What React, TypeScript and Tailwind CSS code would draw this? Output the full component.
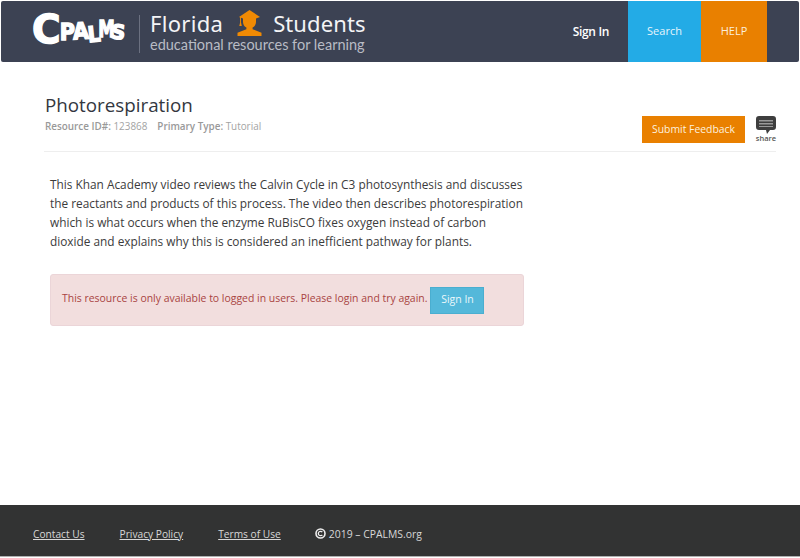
export default function App() {
  return (
    <div className="h-[558px] w-[800px] flex flex-col bg-white font-['Open_Sans',sans-serif] overflow-hidden">
      <header className="mx-px h-[61px] mt-px shrink-0 flex bg-[#3c4253] rounded-[2px] text-white">
        <div className="w-[31px]" />
        <div className="w-[107px] flex items-center font-['DejaVu_Sans',sans-serif] font-bold leading-none select-none -mt-[4px] [-webkit-text-stroke:1.4px_white]">
          <span className="text-[39px] -mr-[2px]">C</span>
          <span className="text-[23px] -mr-[3px] translate-y-[3px] scale-x-90">P</span>
          <span className="text-[23px] -mr-[3px] translate-y-[2px] -rotate-3 scale-x-90">A</span>
          <span className="text-[22px] -mr-[5px] translate-y-[5px] -rotate-6 scale-x-90">L</span>
          <span className="text-[23px] -mr-[6px] -translate-x-[1px] scale-x-[0.72]">M</span>
          <span className="text-[20px] -ml-[2px] translate-y-[2px] rotate-6">S</span>
        </div>
        <div className="w-px h-[38px] bg-[#6b7080] mt-[14px]" />
        <div className="ml-[10px] mt-[6px] flex flex-col font-['Noto_Sans',sans-serif]">
          <div className="flex items-center h-[32px] text-[22px] leading-none text-[#f4f4f6]">
            <span className="tracking-[0.3px]">Florida</span>
            <svg className="ml-[14px] mr-[11px] -mt-[1px]" width="25" height="26" viewBox="0 0 25 26">
              <path fill="#f08a04" d="M12.5 0 23 7l-4 1.6V12c0 2.6-1.6 4.6-3.4 5.6v1.6l8.9 3.6V26H.5v-3.2l8.9-3.6v-1.6C7.6 16.6 6 14.600 6 12V8.600L4 7.800v4.700l.8 3.500H2.300l.8-3.500V7.400L2 7z" />
            </svg>
            <span className="tracking-[0.1px]">Students</span>
          </div>
          <div className="font-['Lato',sans-serif] text-[14.5px] leading-[20px] text-[#b9bcc5] -mt-[4px]">educational resources for learning</div>
        </div>
        <div className="flex-1" />
        <a className="flex items-center justify-center font-semibold text-[12px] tracking-[-0.35px] text-white">Sign In</a>
        <div className="w-[19px]" />
        <a className="w-[73px] flex items-center justify-center bg-[#23abe6] text-[11px] text-[#e6f5fc]">Search</a>
        <a className="w-[66px] flex items-center justify-center bg-[#e98000] text-[11px] text-[#fbeedd]">HELP</a>
        <div className="w-[32px]" />
      </header>

      <main className="flex-1 px-[44px]">
        <div className="w-[732px] flex items-end h-[90px] pb-[8px] border-b border-[#eeeeee]">
          <div className="flex-1 mb-[9px]">
            <h1 className="text-[18.8px] leading-[26px] text-[#333740] ml-px translate-y-[1px]">Photorespiration</h1>
            <div className="text-[9.9px] leading-[16px] mt-[1px] ml-px text-[#a3a3a3]">
              <b className="font-semibold text-[#999999]">Resource ID#:</b> 123868
              <b className="font-semibold text-[#999999] ml-[10px]">Primary Type:</b> Tutorial
            </div>
          </div>
          <a className="w-[103px] h-[27px] mr-[10px] flex items-center justify-center bg-[#e98000] text-[10.4px] text-[#fdf0df]">Submit Feedback</a>
          <div className="w-[22px] flex flex-col items-center mr-[-1px]">
            <svg width="20" height="18" viewBox="0 0 20 18">
              <path fill="#3e3e3e" d="M3 0h14a3 3 0 0 1 3 3v8a3 3 0 0 1-3 3h-3l-3 4-1-4H3a3 3 0 0 1-3-3V3a3 3 0 0 1 3-3z" />
              <path fill="#9a9a9a" d="M3 4h14v1.500H3zM3 7h14v1.500H3zM3 10h14v1H3z" />
            </svg>
            <span className="text-[7.5px] leading-[9px] font-semibold text-[#555555]">share</span>
          </div>
        </div>

        <div className="w-[475px] ml-[6px] mt-[23px] text-[11.85px] leading-[19px] text-[#3c3c3c]">
          This Khan Academy video reviews the Calvin Cycle in C3 photosynthesis and discusses the reactants and products of this process. The video then describes photorespiration which is what occurs when the enzyme RuBisCO fixes oxygen instead of carbon dioxide and explains why this is considered an inefficient pathway for plants.
        </div>

        <div className="w-[474px] h-[52px] ml-[6px] mt-[23px] flex items-center pl-[11px] bg-[#f2dede] border border-[#ebd5d8] rounded-[3px] text-[10.45px] text-[#a94442]">
          <span className="mb-[2px]">This resource is only available to logged in users. Please login and try again.</span>
          <a className="w-[54px] h-[27px] ml-[3px] flex items-center justify-center bg-[#54b8da] border border-[#4aaed0] text-[10.5px] text-[#eaf7fb]">Sign In</a>
        </div>
      </main>

      <footer className="h-[52px] mb-[1px] shrink-0 flex items-center pl-[33px] pt-[8px] bg-[#323333] border-b border-[#b0b0b0] text-[10.2px] text-[#d8d8d8]">
        <a className="underline">Contact Us</a>
        <a className="underline ml-[35px]">Privacy Policy</a>
        <a className="underline ml-[35px]">Terms of Use</a>
        <span className="ml-[34px] flex items-center text-[10.4px]">
          <svg className="mr-[3px] -mt-[2px]" width="11" height="11" viewBox="0 0 11 11">
            <circle cx="5.500" cy="5.500" r="4.500" fill="none" stroke="#eeeeee" strokeWidth="1.600" />
            <path d="M7.300 4.200A2.200 2.200 0 1 0 7.300 6.800" fill="none" stroke="#eeeeee" strokeWidth="1.300" />
          </svg>
          2019 – CPALMS.org
        </span>
      </footer>
    </div>
  );
}
